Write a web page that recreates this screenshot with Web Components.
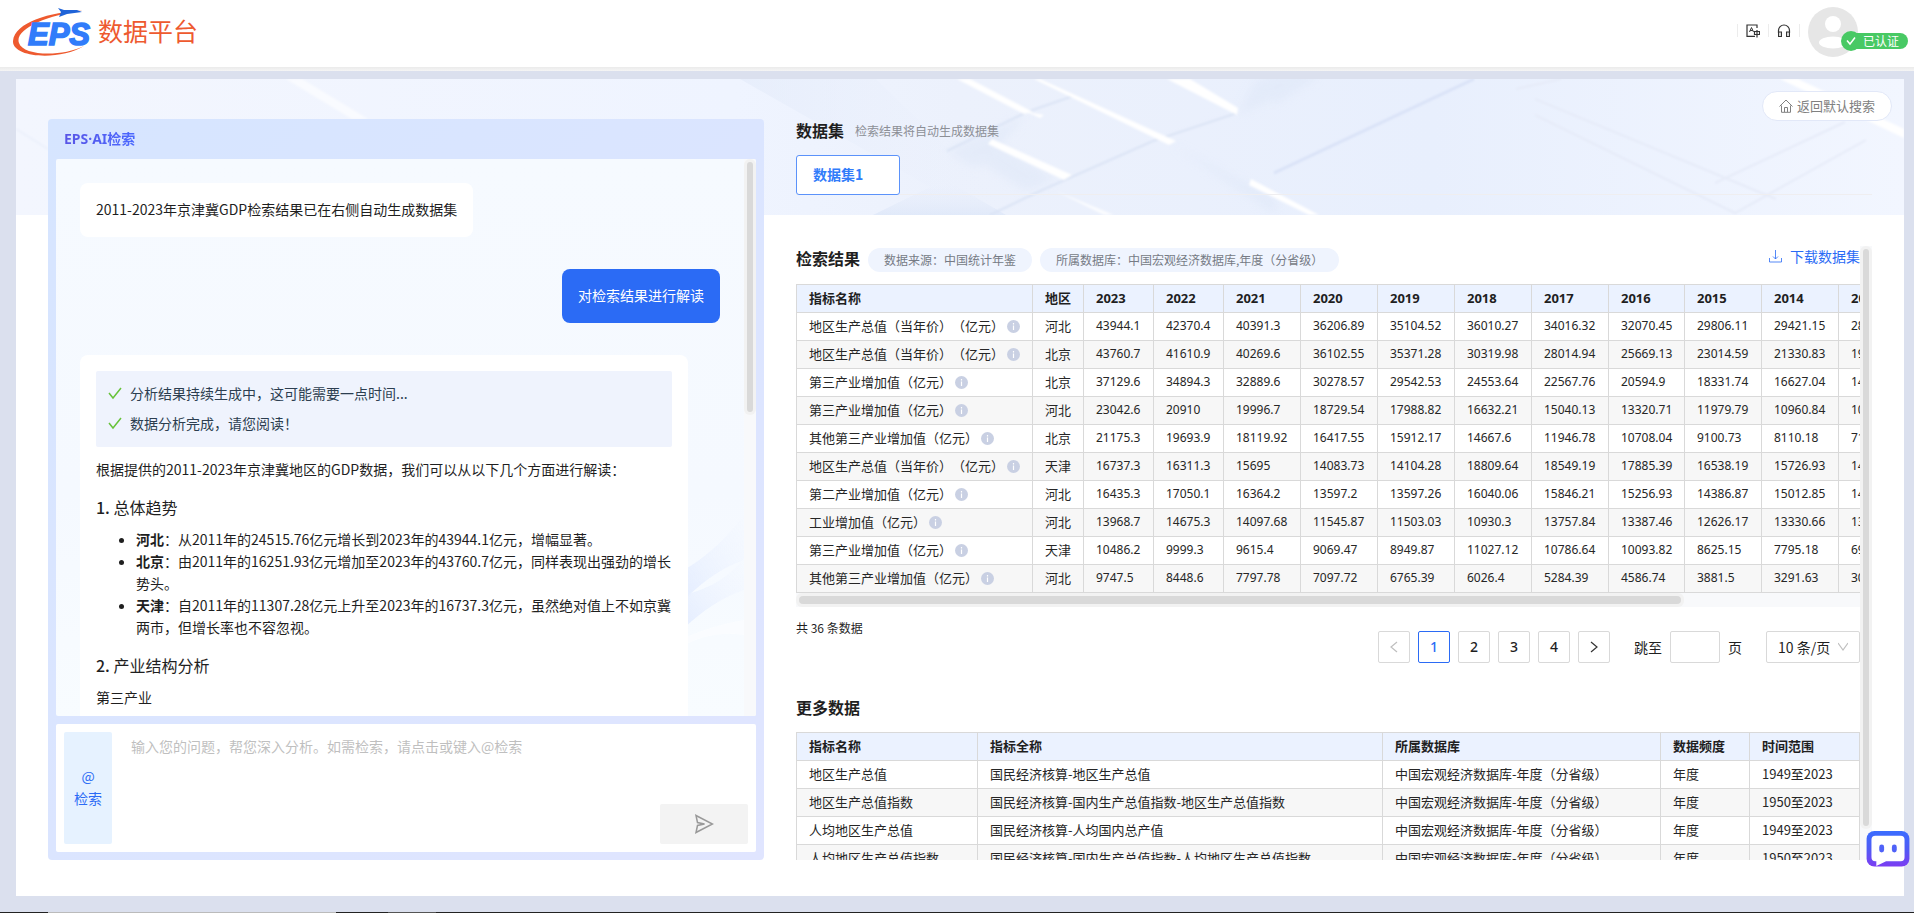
<!DOCTYPE html>
<html lang="zh-CN">
<head>
<meta charset="utf-8">
<title>EPS数据平台</title>
<style>
  html, body { margin: 0; height: 100%; }
  body {
    font: 14px/22px "Noto Sans CJK SC", "Noto Sans", sans-serif;
    color: #1f1f1f;
    text-spacing-trim: space-all;
    overflow: hidden;
  }
</style>
</head>
<body>
<eps-app></eps-app>

<script>
const define = (name, html, setup) => {
  const template = document.createElement('template');
  template.innerHTML = '<style>*{box-sizing:border-box}button,input,select,textarea{font:inherit;color:inherit;margin:0}</style>' + html;
  customElements.define(name, class extends HTMLElement {
    constructor() {
      super();
      this.attachShadow({ mode: 'open' }).append(template.content.cloneNode(true));
      if (setup) setup(this.shadowRoot, this);
    }
  });
};

/* Scroll bar: --len is the thumb's share of the track */
define('scroll-bar', `
<style>
  :host { display: flex; background: #f8f9fb; width: 12px; flex: none; }
  .run { flex: 0 0 var(--len, 50%); background: #f2f2f2; border-radius: 6px; padding: 3px; display: flex; }
  .thumb { flex: 1; background: #d9d9d9; border-radius: 4px; }
  :host { flex-direction: column; }
  :host([horizontal]) { flex-direction: row; width: auto; height: 14px; }
</style>
<div class="run"><div class="thumb"></div></div>`);

define('eps-logo', `
<style>
  :host { display: block; }
  a { display: flex; align-items: flex-start; gap: 4px; color: #ee5a2f; text-decoration: none; font-size: 25px; line-height: 44px; height: 50px; }
  svg { display: block; margin-top: 1px; }
  span { height: 44px; margin-top: 1px; line-height: 44px; }
</style>
<a href="#" aria-label="EPS数据平台">
  <svg width="82" height="50" viewBox="0 0 82 50">
    <path d="M71 2.5 C38 4 3 14 1 33 C0 50 48 53 72 38 C50 49 11 48 7 35 C2 22 34 7 71 2.5z" fill="#ee5a2f"/>
    <path d="M46 0 L52 2 L65 2 L70 4 L55 6 L47 9 L49 4z" fill="#1f63d8"/>
    <text x="16" y="37" font-family="Liberation Sans, sans-serif" font-size="31" font-weight="700" font-style="italic" fill="#317cfa" stroke="#317cfa" stroke-width="1.6">EPS</text>
  </svg>
  <span>数据平台</span>
</a>`);

define('app-header', `
<style>
  :host { display: block; background: #fff; }
  header { display: flex; justify-content: space-between; height: 67px; padding: 7px 56px 0 12px; }
  .line { height: 4px; background: linear-gradient(#ebebeb, #f5f5f5); }
  nav { display: flex; height: 47px; align-items: center; }
  button { border: 0; padding: 0; background: none; width: 30px; height: 16px; display: grid; place-items: center; }
  i { width: 1px; height: 13px; background: #ececec; }
  .user { position: relative; width: 50px; height: 50px; margin-left: 8px; align-self: flex-start; }
  .badge { position: absolute; left: 33px; top: 24px; display: flex; align-items: center; }
  .badge svg { position: relative; flex: none; }
  .badge span { background: #48c964; color: #fff; font-size: 12px; line-height: 16px; border-radius: 0 8px 8px 0; padding: 0 9px 0 12px; margin-left: -10px; white-space: nowrap; }
</style>
<header>
  <eps-logo></eps-logo>
  <nav>
    <i></i>
    <button aria-label="语言"><svg width="14" height="14" viewBox="0 0 14 14" fill="none" stroke="#333" stroke-width="1.2"><path d="M11 4V1H1v11.400h8"/><path d="M3.500 8 5.500 3.500 7.500 8M4.200 6.500h2.600" stroke-width="1"/><path d="M8.500 7.500h5v3h-5zM11 6v7.500"/></svg></button>
    <i></i>
    <button aria-label="客服"><svg width="14" height="14" viewBox="0 0 14 14" fill="none" stroke="#333" stroke-width="1.2"><path d="M1.500 9V6.500a5.500 5.500 0 0 1 11 0V9"/><path d="M1.600 8h2.800v4.500H1.600zM9.600 8h2.800v4.500H9.600z"/></svg></button>
    <i></i>
    <div class="user">
      <svg width="50" height="50" viewBox="0 0 50 50"><circle cx="25" cy="25" r="25" fill="#e6e6e6"/><circle cx="25" cy="17" r="8" fill="#fff"/><ellipse cx="25" cy="35.500" rx="14" ry="6" fill="#fff"/></svg>
      <div class="badge"><svg width="20" height="20" viewBox="0 0 20 20"><circle cx="10" cy="10" r="10" fill="#48c964"/><path d="M6 9.500 9 13 14 6.500" fill="none" stroke="#fff" stroke-width="1.500"/></svg><span>已认证</span></div>
    </div>
  </nav>
</header>
<div class="line"></div>`);

/* Pale geometric backdrop along the top of the workspace */
define('banner-art', `
<style>:host { display: block; height: 136px; } svg { display: block; width: 100%; height: 100%; }</style>
<svg viewBox="0 0 1888 136" preserveAspectRatio="none" aria-hidden="true">
  <defs>
    <linearGradient id="b"><stop offset="0" stop-color="#f3f6fe"/><stop offset=".38" stop-color="#eff4ff"/><stop offset=".5" stop-color="#ecf1fc"/><stop offset=".75" stop-color="#e8effd"/><stop offset="1" stop-color="#f2f6ff"/></linearGradient>
    <linearGradient id="h" x1="0" y1="0" x2="1" y2="0"><stop offset="0" stop-color="#e2eaf9"/><stop offset="1" stop-color="#ebf0fc" stop-opacity="0"/></linearGradient>
    <linearGradient id="d" x1="0" y1="1" x2="0" y2="0"><stop offset="0" stop-color="#dce6f8"/><stop offset="1" stop-color="#e8eefb" stop-opacity="0"/></linearGradient>
    <filter id="s" x="-5%" y="-5%" width="110%" height="110%"><feGaussianBlur stdDeviation="1"/></filter>
    <filter id="w" x="-20%" y="-20%" width="140%" height="140%"><feGaussianBlur stdDeviation="5"/></filter>
  </defs>
  <rect width="1888" height="136" fill="url(#b)"/>
  <path d="M724 0 914 108 857 136H1000L860 0z" fill="url(#h)" opacity=".6"/>
  <path d="M914 108 857 136H990L935 104z" fill="url(#d)" opacity=".7"/>
  <g filter="url(#w)" fill="#dde6f7" opacity=".5"><path d="M1222 36 1300 0H1240zM1157 66 1260 120V136zM974 62 1040 100 1010 112 960 80zM931 72 1011 36 960 90zM1258 26 1299 0V-6H1250z"/></g>
  <g filter="url(#s)">
    <g fill="none" stroke="#dbe4f5" stroke-width="2">
      <path d="M974 136 1024 112 1137 62 1221 34M931 72 1011 33 1057 17" />
      <path d="M0 50 32 70" stroke="#ebf0fb"/>
      <path d="M1258 94 1458 0" stroke="#d9e2f7" stroke-width="3"/>
      <path d="M1519 36 1719 134 1850 61M1699 104 1829 43M1500 10 1545 0M1519 20 1760 120" stroke="#e6ebf8"/>
    </g>
    <g fill="#fff">
      <path d="M941 0H954L1017 33 1008 35zM1151 0H1174L1222 29 1221 36zM1018 0H1024L1160 62 1153 66zM976 60 1056 96 1048 101 972 65zM1011 33 1028 36 1024 39z"/>
      <path d="M1235 100 1303 136H1293L1233 106z"/>
      <path d="M1764 0H1782L1888 50V59z"/>
      <path d="M270 0H286L352 40H336z" opacity=".6"/>
      <path d="M1040 112 1098 136H1088z" opacity=".8"/>
    </g>
  </g>
</svg>`);

define('chat-bubble', `
<style>
  :host { display: block; align-self: flex-start; background: #fff; border-radius: 8px; padding: 15px 16px 17px; }
  :host([mine]) { align-self: flex-end; background: #2b6bf5; color: #fff; }
  :host([wide]) { width: 95%; padding-top: 16px; }
</style>
<slot></slot>`);

define('status-line', `
<style>
  :host { display: flex; align-items: center; gap: 8px; line-height: 30px; color: #2c3e50; padding: 0 12px; }
  svg { flex: none; }
</style>
<svg width="14" height="14" viewBox="0 0 14 14" fill="none" stroke="#67c23a" stroke-width="1.500"><path d="M1 7 5 12 13 2"/></svg><span><slot></slot></span>`);

define('chat-panel', `
<style>
  :host { display: flex; flex-direction: column; min-height: 0; padding: 0 8px 8px; border-radius: 4px; background: linear-gradient(135deg, #d6e5ff, #dbe5ff 50%, #e0e5ff); }
  h2 { margin: 0; font-family: "Noto Sans", "Noto Sans CJK SC", sans-serif; font-size: 14px; line-height: 40px; height: 40px; padding-left: 8px; }
  h2 span { background: linear-gradient(90deg, #5a55e6, #4a68ff); -webkit-background-clip: text; color: transparent; }
  .log { flex: 1; min-height: 0; display: flex; border-radius: 2px; overflow: hidden; position: relative; background: linear-gradient(#f6faff, #f5f9ff 60%, #f8fcff); }
  .art { position: absolute; right: 12px; bottom: 56px; width: 60px; height: 160px; opacity: .8; }
  .msgs { position: relative; flex: 1; min-width: 0; overflow: hidden; padding: 24px 24px 0; display: flex; flex-direction: column; gap: 32px; }
  .msgs > * { flex: none; }
  scroll-bar { --len: 46%; }
  .done { background: #eff3fd; border-radius: 2px; padding: 7px 0 9px; }
  h3 { font-size: 16px; font-weight: 400; line-height: 22px; margin: 16px 0 10px; }
  h3 b { font-weight: 500; }
  p { margin: 10px 0 0; }
  .done + p { margin-top: 11px; }
  ul { margin: 0; padding-left: 40px; }
  form { display: flex; gap: 8px; margin-top: 8px; height: 128px; background: #fff; border-radius: 2px; padding: 8px; }
  button { border: 0; border-radius: 2px; padding: 0; }
  .at { width: 48px; background: #e6f2ff; color: #2b6bf5; padding-bottom: 3px; }
  textarea { flex: 1; border: 0; outline: 0; resize: none; background: none; padding: 3px 11px; }
  textarea::placeholder { color: #bfbfbf; opacity: 1; }
  .send { align-self: flex-end; width: 88px; height: 40px; background: #f3f3f3; display: grid; place-items: center; }
</style>
<h2><span>EPS·AI检索</span></h2>
<div class="log">
  <svg class="art" viewBox="0 0 60 160" preserveAspectRatio="none" aria-hidden="true">
    <defs><linearGradient id="g" x1="0" y1="1" x2="1" y2="0"><stop offset="0" stop-color="#dfe9ff"/><stop offset="1" stop-color="#f4f8ff" stop-opacity=".3"/></linearGradient></defs>
    <path d="M0 70Q34 50 60 15V60Q30 70 0 100z" fill="url(#g)"/><path d="M0 95Q40 85 60 58V90Q30 100 0 128z" fill="url(#g)"/><path d="M0 138Q30 125 60 120V135Q30 130 0 145z" fill="#fff" opacity=".6"/>
  </svg>
  <div class="msgs">
    <chat-bubble>2011-2023年京津冀GDP检索结果已在右侧自动生成数据集</chat-bubble>
    <chat-bubble mine>对检索结果进行解读</chat-bubble>
    <chat-bubble wide>
      <div class="done"><status-line>分析结果持续生成中，这可能需要一点时间...</status-line><status-line>数据分析完成，请您阅读！</status-line></div>
      <p>根据提供的2011-2023年京津冀地区的GDP数据，我们可以从以下几个方面进行解读：</p>
      <h3><b>1.</b> 总体趋势</h3>
      <ul>
        <li><b>河北</b>：从2011年的24515.76亿元增长到2023年的43944.1亿元，增幅显著。</li>
        <li><b>北京</b>：由2011年的16251.93亿元增加至2023年的43760.7亿元，同样表现出强劲的增长势头。</li>
        <li><b>天津</b>：自2011年的11307.28亿元上升至2023年的16737.3亿元，虽然绝对值上不如京冀两市，但增长率也不容忽视。</li>
      </ul>
      <h3><b>2.</b> 产业结构分析</h3>
      <p>第三产业</p>
    </chat-bubble>
  </div>
  <scroll-bar></scroll-bar>
</div>
<form onsubmit="return false">
  <button class="at" type="button">@<br>检索</button>
  <textarea aria-label="输入您的问题" placeholder="输入您的问题，帮您深入分析。如需检索，请点击或键入@检索"></textarea>
  <button class="send" aria-label="发送"><svg width="20" height="20" viewBox="0 0 20 20" fill="none" stroke="#999" stroke-width="1.500"><path d="M2 1.500 18.500 10 2 18.500 3.500 11.500 10.500 10 3.500 8.500z"/></svg></button>
</form>`);

const tableStyle = `
  :host { display: block; overflow: hidden; }
  table { table-layout: fixed; border-collapse: separate; border-spacing: 0; border: solid #d9d9d9; border-width: 1px 0 0 1px; font-size: 13px; line-height: 20px; color: #262626; }
  th, td { height: 28px; padding: 3px 0 4px 12px; text-align: left; white-space: nowrap; border: solid #d9d9d9; border-width: 0 1px 1px 0; }
  th { background: #ebf2ff; font-weight: 700; color: #1f1f1f; }
  tr:nth-child(even) td { background: #f7f7f7; }`;

const INFO = '<svg width="13" height="13" viewBox="0 0 13 13" aria-hidden="true"><circle cx="6.500" cy="6.500" r="6.500" fill="#c9d0e3"/><path d="M6.500 3v1.500M6.500 5.500V10" stroke="#fff" stroke-width="1.200"/></svg>';

const results = [
  ['地区生产总值（当年价）（亿元）', '河北', '43944.1 42370.4 40391.3 36206.89 35104.52 36010.27 34016.32 32070.45 29806.11 29421.15 28442.95'],
  ['地区生产总值（当年价）（亿元）', '北京', '43760.7 41610.9 40269.6 36102.55 35371.28 30319.98 28014.94 25669.13 23014.59 21330.83 19800.81'],
  ['第三产业增加值（亿元）', '北京', '37129.6 34894.3 32889.6 30278.57 29542.53 24553.64 22567.76 20594.9 18331.74 16627.04 14986.43'],
  ['第三产业增加值（亿元）', '河北', '23042.6 20910 19996.7 18729.54 17988.82 16632.21 15040.13 13320.71 11979.79 10960.84 10038.89'],
  ['其他第三产业增加值（亿元）', '北京', '21175.3 19693.9 18119.92 16417.55 15912.17 14667.6 11946.78 10708.04 9100.73 8110.18 7140.15'],
  ['地区生产总值（当年价）（亿元）', '天津', '16737.3 16311.3 15695 14083.73 14104.28 18809.64 18549.19 17885.39 16538.19 15726.93 14442.01'],
  ['第二产业增加值（亿元）', '河北', '16435.3 17050.1 16364.2 13597.2 13597.26 16040.06 15846.21 15256.93 14386.87 15012.85 14781.85'],
  ['工业增加值（亿元）', '河北', '13968.7 14675.3 14097.68 11545.87 11503.03 10930.3 13757.84 13387.46 12626.17 13330.66 13194.76'],
  ['第三产业增加值（亿元）', '天津', '10486.2 9999.3 9615.4 9069.47 8949.87 11027.12 10786.64 10093.82 8625.15 7795.18 6905.03'],
  ['其他第三产业增加值（亿元）', '河北', '9747.5 8448.6 7797.78 7097.72 6765.39 6026.4 5284.39 4586.74 3881.5 3291.63 3012.45']
];
define('result-table', `
<style>${tableStyle}
  table { width: 1120px; }
  td:nth-child(n+3) { font: 12px/20px "Noto Sans", sans-serif; }
  th:nth-child(n+3) { font-family: "Noto Sans", sans-serif; }
  td svg { margin-left: 3px; vertical-align: -2px; }
</style>
<table></table>`, root => {
  const years = Array.from({ length: 11 }, (_, i) => 2023 - i);
  root.querySelector('table').innerHTML =
    '<colgroup>' + [236, 51, 70, 70, 77, 77, 77, 77, 77, 76, 77, 77, 77].map(w => `<col style="width:${w}px">`).join('') + '</colgroup>' +
    '<thead><tr>' + ['指标名称', '地区', ...years].map(h => `<th>${h}</th>`).join('') + '</tr></thead><tbody>' +
    results.map(([n, area, v]) => `<tr><td>${n}${INFO}</td><td>${area}</td>${v.split(' ').map(x => `<td>${x}</td>`).join('')}</tr>`).join('') + '</tbody>';
});

define('more-table', `
<style>${tableStyle} table { width: 100%; }</style>
<table></table>`, root => {
  const db = '中国宏观经济数据库-年度（分省级）';
  const rows = [
    ['地区生产总值', '国民经济核算-地区生产总值', 1949],
    ['地区生产总值指数', '国民经济核算-国内生产总值指数-地区生产总值指数', 1950],
    ['人均地区生产总值', '国民经济核算-人均国内总产值', 1949],
    ['人均地区生产总值指数', '国民经济核算-国内生产总值指数-人均地区生产总值指数', 1950]
  ];
  root.querySelector('table').innerHTML =
    '<colgroup><col style="width:181px"><col style="width:405px"><col style="width:278px"><col style="width:89px"><col></colgroup>' +
    '<thead><tr>' + ['指标名称', '指标全称', '所属数据库', '数据频度', '时间范围'].map(h => `<th>${h}</th>`).join('') + '</tr></thead><tbody>' +
    rows.map(([a, b, y]) => `<tr><td>${a}</td><td>${b}</td><td>${db}</td><td>年度</td><td>${y}至2023</td></tr>`).join('') + '</tbody>';
});

define('page-nav', `
<style>
  :host { display: flex; align-items: center; gap: 8px; }
  button, input, .size { height: 32px; border: 1px solid #d9d9d9; border-radius: 2px; background: #fff; }
  button { width: 32px; padding: 0; display: grid; place-items: center; font-family: "Noto Sans", sans-serif; font-weight: 500; }
  button.on { border-color: #2b6bf5; color: #2b6bf5; }
  label { display: flex; align-items: center; gap: 8px; margin-left: 16px; }
  input { width: 50px; padding: 0 8px; }
  .size { position: relative; width: 94px; margin-left: 16px; }
  select { appearance: none; border: 0; background: none; width: 100%; height: 30px; padding: 0 0 0 11px; }
  .size svg { position: absolute; right: 11px; top: 10px; pointer-events: none; }
</style>
<button aria-label="上一页"><svg width="12" height="12" viewBox="0 0 12 12" fill="none" stroke="#bfbfbf" stroke-width="1.200"><path d="M9 1 3 6 9 11"/></svg></button>
<button class="on">1</button><button>2</button><button>3</button><button>4</button>
<button aria-label="下一页"><svg width="12" height="12" viewBox="0 0 12 12" fill="none" stroke="#333" stroke-width="1.200"><path d="M3 1 9 6 3 11"/></svg></button>
<label><span>跳至</span><input type="text"><span>页</span></label>
<div class="size"><select aria-label="每页条数"><option>10 条/页</option></select><svg width="10" height="10" viewBox="0 0 10 10" fill="none" stroke="#bfbfbf" stroke-width="1.200"><path d="M0 1 5 8 10 1"/></svg></div>`);

define('info-pill', `
<style>:host { display: block; background: #eff4fe; color: #767b85; border-radius: 12px; font-size: 12px; line-height: 24px; padding: 0 16px; white-space: nowrap; }</style>
<slot></slot>`);

define('dataset-panel', `
<style>
  :host { display: flex; flex-direction: column; min-width: 0; min-height: 0; }
  h2 { margin: 0; font-size: 16px; line-height: 22px; padding-bottom: 2px; font-weight: 700; white-space: nowrap; }
  .head { display: flex; align-items: center; gap: 11px; }
  .head span { font-size: 12px; color: #8c8f96; }
  .tabs { margin-top: 12px; border-bottom: 1px solid #efeef0; height: 40px; }
  .tabs button { width: 104px; height: 40px; border: 1px solid #5b92fa; border-radius: 3px; background: #fff; color: #317cfa; font-weight: 700; text-align: left; padding: 0 0 2px 16px; }
  .scroll { flex: 1; min-height: 0; margin-top: 51px; display: flex; }
  .scroll > scroll-bar { --len: 95%; }
  .body { flex: 1; min-width: 0; overflow: hidden; display: flex; flex-direction: column; }
  .body > * { flex: none; }
  .title { display: flex; height: 26px; align-items: center; gap: 8px; margin-bottom: 12px; }
  .title info-pill { align-self: flex-end; }
  .title a { margin-left: auto; align-self: flex-start; line-height: 20px; color: #2b6bf5; text-decoration: none; display: flex; align-items: center; gap: 8px; white-space: nowrap; }
  .body > scroll-bar { --len: 83.5%; }
  .foot { display: flex; justify-content: space-between; margin: 11px 0 33px; }
  .foot > span { font-size: 12px; line-height: 20px; }
  page-nav { margin-top: 13px; }
  .body > h2 { margin-bottom: 12px; }
</style>
<div class="head"><h2>数据集</h2><span>检索结果将自动生成数据集</span></div>
<div class="tabs"><button>数据集1</button></div>
<div class="scroll">
  <div class="body">
    <div class="title">
      <h2>检索结果</h2>
      <info-pill>数据来源：中国统计年鉴</info-pill>
      <info-pill>所属数据库：中国宏观经济数据库,年度（分省级）</info-pill>
      <a href="#"><svg width="13" height="13" viewBox="0 0 13 13" fill="none" stroke="#2b6bf5"><path d="M6.500 0V9M4 6.500 6.500 9 9 6.500M.5 8V12H12.500V8" opacity=".8"/></svg>下载数据集</a>
    </div>
    <result-table></result-table>
    <scroll-bar horizontal></scroll-bar>
    <div class="foot"><span>共 36 条数据</span><page-nav></page-nav></div>
    <h2>更多数据</h2>
    <more-table></more-table>
  </div>
  <scroll-bar></scroll-bar>
</div>`);

define('help-bot', `
<style>
  :host { position: fixed; right: 4px; bottom: 46px; }
  button { border: 0; padding: 0; background: none; display: block; }
  svg { display: block; }
</style>
<button aria-label="智能助手"><svg width="44" height="36" viewBox="0 0 44 37">
  <defs><linearGradient id="r" x1="0" y1="0" x2="0" y2="1"><stop offset="0" stop-color="#3a6dff"/><stop offset=".5" stop-color="#4f5bf5"/><stop offset="1" stop-color="#7c3df2"/></linearGradient></defs>
  <rect width="44" height="36.500" rx="8" fill="url(#r)"/>
  <path d="M9 5H35Q39 5 39 9V27Q39 31 35 31H20L10 36 10 31H9Q5 31 5 27V9Q5 5 9 5z" fill="#fff"/>
  <rect x="13" y="14" width="5" height="8" rx="2.500" fill="#4f62f8"/><rect x="26" y="14" width="5" height="8" rx="2.500" fill="#4f62f8"/>
</svg></button>`);

define('eps-app', `
<style>
  :host { display: flex; flex-direction: column; height: 100vh; background: #dbe0ee; }
  app-header { flex: none; }
  main { position: relative; flex: 1; min-height: 0; margin: 8px 10px 16px 16px; background: #fff; padding: 40px 32px 36px; display: grid; grid-template-columns: minmax(0, 179fr) minmax(0, 269fr); grid-template-rows: minmax(0, 1fr); gap: 32px; }
  banner-art { position: absolute; inset: 0 0 auto; }
  chat-panel, dataset-panel { position: relative; }
  .back { position: absolute; right: 12px; top: 12px; height: 30px; border: 1px solid #e2e8f8; border-radius: 15px; background: #fff; color: #808080; font-size: 13px; display: flex; align-items: center; gap: 4px; padding: 0 16px; }
  .edge { flex: none; height: 1px; background: linear-gradient(90deg, #222 48px, #bbb 48px 336px, #222 336px 388px, #555 388px 436px, #222 436px); }
</style>
<app-header></app-header>
<main>
  <banner-art></banner-art>
  <chat-panel></chat-panel>
  <dataset-panel></dataset-panel>
  <button class="back"><svg width="14" height="14" viewBox="0 0 14 14" fill="none" stroke="#808080"><path d="M.5 7.500 7 1 13.500 7.500M2.500 6.500V13.300H11.500V6.500M5.500 13V8.500H8.500V13"/></svg>返回默认搜索</button>
</main>
<div class="edge"></div>
<help-bot></help-bot>`);
</script>
</body>
</html>
